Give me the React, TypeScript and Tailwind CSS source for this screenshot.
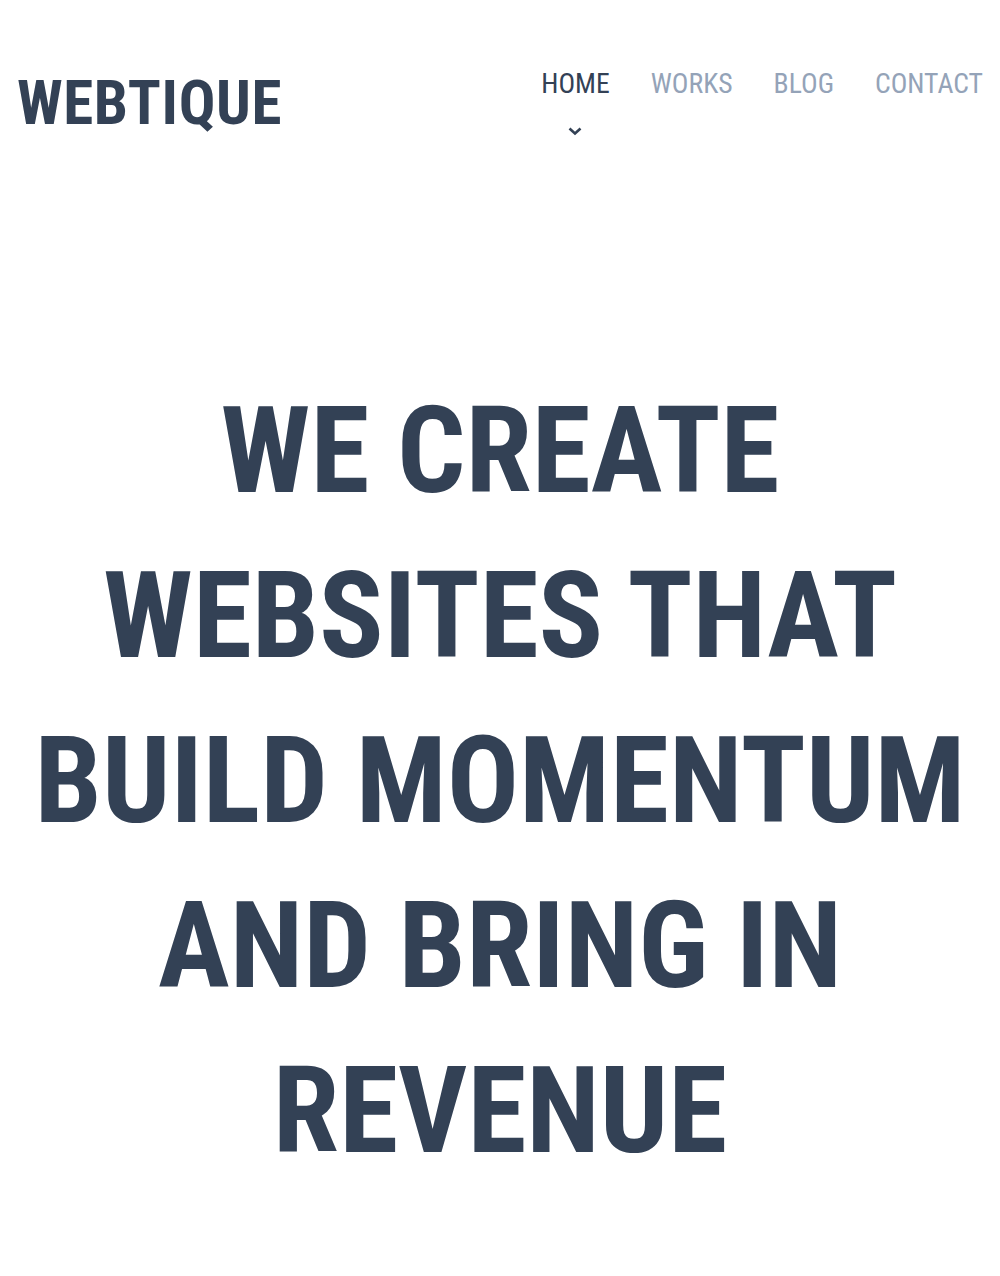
import type { FC } from "react";

const links = ["WORKS", "BLOG", "CONTACT"];

const Header: FC = () => {
  return (
    <header className="flex justify-between items-start pl-[17px] pr-[17px] pt-[67px]">
      <h1 className="font-bold text-[61px] leading-[72px] tracking-[0.6px] text-[#334155]">WEBTIQUE</h1>

      <nav className="flex gap-[41px] text-[27.7px] leading-[36px] -mt-[1px]">
        <div className="flex flex-col items-center">
          <a href="#" className="text-[#334155]">HOME</a>
          {/* dropdown caret under the active item */}
          <svg width="16" height="10" viewBox="0 0 16 10" className="mt-[24px]">
            <path d="M2.5 2.5l5.5 5 5.5-5" fill="none" stroke="#334155" strokeWidth="2.6" />
          </svg>
        </div>
        {links.map((l) => (
          <a key={l} href="#" className="text-[#94a3b8]">{l}</a>
        ))}
      </nav>
    </header>
  );
};

const App: FC = () => {
  return (
    <div className="min-h-[1276px] bg-white" style={{ fontFamily: '"Roboto Condensed", Roboto, sans-serif' }}>
      <Header />
      <section className="pt-[230px] px-2">
        <h2 className="text-center font-bold text-[120px] leading-[165px] text-[#334155]">
          WE CREATE WEBSITES THAT BUILD MOMENTUM AND BRING IN REVENUE
        </h2>
      </section>
    </div>
  );
};

export default App;
